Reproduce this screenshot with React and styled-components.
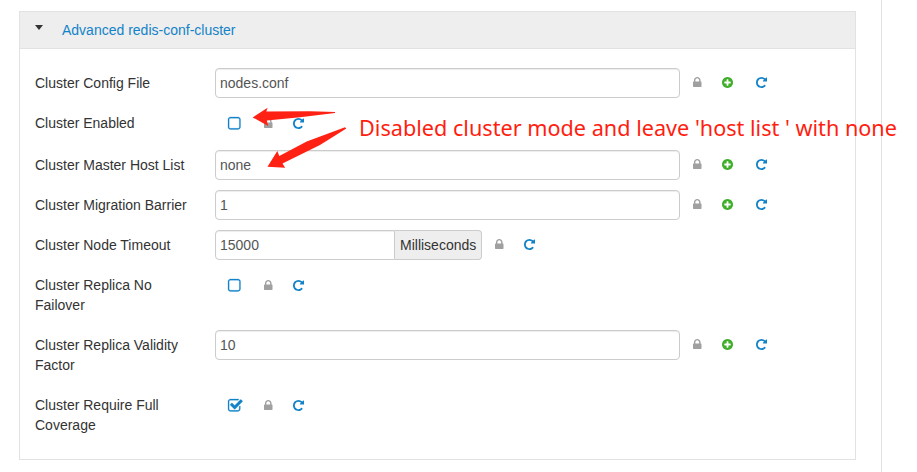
import React from "react";
import styled, { createGlobalStyle, css } from "styled-components";

const GlobalStyle = createGlobalStyle`
  * { box-sizing: border-box; }
  body {
    margin: 0;
    background: #fff;
    color: #333;
    font: 14px/20px "Liberation Sans", Arial, sans-serif;
    overflow: hidden;
  }
`;

const Page = styled.div`
  position: relative;
  width: 917px;
  height: 472px;
  overflow: hidden;
`;

const Content = styled.main`
  width: 882px;
  height: 472px;
  padding: 11px 25px 0 19px;
  border-right: 1px solid #e2e2e2;
`;

const Panel = styled.section`
  width: 837px;
  height: 449px;
  border: 1px solid #e2e2e2;
`;

const PanelHeader = styled.header`
  display: flex;
  height: 37px;
  padding: 8px 15px;
  background: #eee;
  border-bottom: 1px solid #e2e2e2;
`;

const Caret = styled.span`
  width: 8px;
  height: 5px;
  margin: 5px 19px 0 0;
  border: 4px solid transparent;
  border-top: 5px solid #333;
  border-bottom: 0;
`;

const PanelTitle = styled.span`
  color: #1283c9;
`;

const Form = styled.div`
  display: flex;
  flex-direction: column;
  gap: 10px;
  padding: 19px 15px;
`;

const Row = styled.div`
  display: flex;
  align-items: flex-start;
  min-height: ${(p) => (p.$tall ? 32 : 30)}px;
`;

const Label = styled.label`
  width: 180px;
  padding: 5px 20px 5px 0;
`;

const Field = styled.div`
  display: flex;
`;

const Input = styled.input`
  width: ${(p) => (p.$narrow ? 180 : 465)}px;
  height: 30px;
  padding: 4px;
  border: 1px solid #ccc;
  border-radius: ${(p) => (p.$narrow ? "4px 0 0 4px" : "4px")};
  box-shadow: inset 0 1px 1px rgba(0, 0, 0, 0.075);
  background: #fff;
  color: #555;
  font: inherit;
  outline: none;
`;

const Unit = styled.span`
  width: 87px;
  height: 30px;
  padding: 4px 0 4px 5px;
  border: 1px solid #ccc;
  border-left: 0;
  border-radius: 0 4px 4px 0;
  background: #eee;
`;

const CheckSlot = styled.span`
  width: 36px;
  height: 30px;
  padding: 8.5px 0 0 12.5px;
  color: #1283c9;
`;

const Actions = styled.div`
  display: flex;
  align-items: center;
  height: ${(p) => (p.$check ? 30 : 28.5)}px;
  padding-left: 12.5px;
  gap: 21px;
`;

const glyphColor = { lock: "#a0a0a0", plus: "#3fae2a", undo: "#1283c9" };

const Glyph = styled.svg`
  display: block;
  flex: none;
  fill: currentColor;
  overflow: visible;
  ${(p) => p.$kind && css`color: ${glyphColor[p.$kind]};`}
  ${(p) => !p.$kind && css`stroke: currentColor; stroke-width: 30;`}
  ${(p) => p.$kind === "undo" && p.$spaced && css`margin-left: 1.5px;`}
`;

const Note = styled.div`
  position: absolute;
  left: 359px;
  top: 113px;
  color: #ff1e10;
  font: 21.65px/30px "Noto Sans", "Open Sans", sans-serif;
  white-space: pre;
`;

const Arrows = styled.svg`
  position: absolute;
  left: 0;
  top: 0;
  pointer-events: none;
  fill: #ff2113;
`;

const paths = {
  lock: "M320 768h512v192q0 106-75 181t-181 75-181-75-75-181v-192zM1152 672v-576q0-40-28-68t-68-28h-960q-40 0-68 28t-28 68v576q0 40 28 68t68 28h32v192q0 184 132 316t316 132 316-132 132-316v-192h32q40 0 68-28t28-68z",
  plus: "M1216 576v128q0 26-19 45t-45 19h-256v256q0 26-19 45t-45 19h-128q-26 0-45-19t-19-45v-256h-256q-26 0-45-19t-19-45v-128q0-26 19-45t45-19h256v-256q0-26 19-45t45-19h128q26 0 45 19t19 45v256h256q26 0 45 19t19 45zM1536 640q0-209-103-385.5t-279.5-279.5-385.5-103-385.5 103-279.5 279.5-103 385.5 103 385.5 279.5 279.5 385.5 103 385.5-103 279.5-279.5 103-385.5z",
  undo: "M1536 1280v-448q0-26-19-45t-45-19h-448q-42 0-59 40q-17 39 14 69l138 138q-148 137-349 137q-104 0-198.5-40.5t-163.5-109.5t-109.5-163.5t-40.5-198.5t40.5-198.5t109.5-163.5t163.5-109.5t198.5-40.5q119 0 225 52t179 147q7 10 23 12q15 0 25-9l137-138q9-8 9.5-20.5t-7.5-22.5q-109-132-264-204.5t-327-72.5q-156 0-298 61t-245 164t-164 245t-61 298t61 298t164 245t245 164t298 61q147 0 284.5-55.5t244.5-156.5l130 129q29 31 70 14q39-17 39-59z",
  empty: "M1120 1280h-832q-66 0-113-47t-47-113v-832q0-66 47-113t113-47h832q66 0 113 47t47 113v832q0 66-47 113t-113 47zM1408 1120v-832q0-119-84.5-203.5t-203.5-84.5h-832q-119 0-203.5 84.5t-84.5 203.5v832q0 119 84.5 203.5t203.5 84.5h832q119 0 203.5-84.5t84.5-203.5z",
  checked: "M1408 606v-318q0-119-84.5-203.5t-203.5-84.5h-832q-119 0-203.5 84.5t-84.5 203.5v832q0 119 84.5 203.5t203.5 84.5h832q63 0 117-25q15-7 18-23q3-17-9-29l-49-49q-10-10-23-10q-3 0-9 2q-23 6-45 6h-832q-66 0-113-47t-47-113v-832q0-66 47-113t113-47h832q66 0 113 47t47 113v254q0 13 9 22l64 64q10 10 23 10q6 0 12-3q20-8 20-29zM1639 1095l-814-814q-24-24-57-24t-57 24l-430 430q-24 24-24 57t24 57l110 110q24 24 57 24t57-24l263-263l647 647q24 24 57 24t57-24l110-110q24-24 24-57t-24-57z",
};

// Glyph outlines use a y-up em box of 1792 units; each entry is [units wide, bottom, units tall, px wide, px tall].
const boxes = {
  lock: [1152, 0, 1408, 8.5, 10],
  plus: [1536, -128, 1536, 11, 11],
  undo: [1536, -128, 1536, 11, 11],
  empty: [1408, 0, 1408, 12.5, 12.5],
  checked: [1664, 0, 1408, 14.5, 12.5],
};

function Icon({ name, spaced }) {
  const [w, bottom, h, width, height] = boxes[name];
  return (
    <Glyph
      $kind={glyphColor[name] ? name : undefined}
      $spaced={spaced}
      width={width}
      height={height}
      viewBox={`0 0 ${w} ${h}`}
      preserveAspectRatio="none"
    >
      <path transform={`translate(0 ${h + bottom}) scale(1 -1)`} d={paths[name]} />
    </Glyph>
  );
}

const settings = [
  { label: "Cluster Config File", value: "nodes.conf", final: true },
  { label: "Cluster Enabled", checked: false, tall: true },
  { label: "Cluster Master Host List", value: "none", final: true },
  { label: "Cluster Migration Barrier", value: "1", final: true },
  { label: "Cluster Node Timeout", value: "15000", unit: "Milliseconds" },
  { label: "Cluster Replica No Failover", checked: false },
  { label: "Cluster Replica Validity Factor", value: "10", final: true },
  { label: "Cluster Require Full Coverage", checked: true },
];

function Setting({ label, value, unit, checked, final, tall }) {
  const isCheck = value === undefined;
  return (
    <Row $tall={tall}>
      <Label>{label}</Label>
      <Field>
        {isCheck ? (
          <CheckSlot>
            <Icon name={checked ? "checked" : "empty"} />
          </CheckSlot>
        ) : (
          <Input value={value} readOnly $narrow={!!unit} aria-label={label} />
        )}
        {unit && <Unit>{unit}</Unit>}
        <Actions $check={isCheck}>
          <Icon name="lock" />
          {final && <Icon name="plus" />}
          <Icon name="undo" spaced={final} />
        </Actions>
      </Field>
    </Row>
  );
}

export default function App() {
  return (
    <Page>
      <GlobalStyle />
      <Content>
        <Panel>
          <PanelHeader>
            <Caret />
            <PanelTitle>Advanced redis-conf-cluster</PanelTitle>
          </PanelHeader>
          <Form>
            {settings.map((s) => (
              <Setting key={s.label} {...s} />
            ))}
          </Form>
        </Panel>
      </Content>
      <Arrows width="917" height="472" viewBox="0 0 917 472">
        <path d="M252.7 117.4L267.6 107.8L266.3 111.5L310 111.3L335 112L335 113L300 117.3L266.8 120.5L268.2 126Z" />
        <path d="M267.5 166.8L277.3 151L279.3 156L306.7 141.4L345 127.3L346.3 128.5L320 145L282.5 163.5L285.2 167.8Z" />
      </Arrows>
      <Note>Disabled cluster mode and leave 'host list ' with none</Note>
    </Page>
  );
}
